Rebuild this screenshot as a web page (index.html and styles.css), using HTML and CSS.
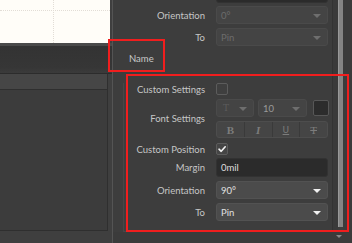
FILE: index.html
```html
<!DOCTYPE html>
<html>
<head>
<meta charset="utf-8">
<link rel="stylesheet" href="styles.css">
</head>
<body>
<div class="app">
  <div class="left">
    <div class="canvas">
      <div class="grid-v"></div>
      <div class="grid-h"></div>
    </div>
    <div class="canvas-edge"></div>
    <div class="tabbar"></div>
    <div class="tablist">
      <div class="tablist-head"></div>
      <div class="tablist-body"></div>
    </div>
  </div>
  <div class="panel">
    <div class="panel-main">
      <div class="content">
        <div class="row row-top">
          <span class="label"></span>
          <div class="input dark"></div>
        </div>
        <div class="row">
          <span class="label">Orientation</span>
          <div class="select disabled"><span>0°</span><i class="caret"></i></div>
        </div>
        <div class="row">
          <span class="label">To</span>
          <div class="select disabled"><span>Pin</span><i class="caret"></i></div>
        </div>
        <div class="name-row">Name</div>
        <div class="group">
          <div class="row row-check">
            <span class="label">Custom Settings</span>
            <div class="checkbox"></div>
          </div>
          <div class="row row-font">
            <span class="label">Font Settings</span>
            <div class="font-ctrls">
              <div class="font-line">
                <div class="select disabled font-family"><span class="tglyph">T</span><i class="caret"></i></div>
                <div class="select disabled font-size"><span class="size">10</span><i class="caret"></i></div>
                <div class="swatch"></div>
              </div>
              <div class="btn-group">
                <span class="fbtn b">B</span>
                <span class="fbtn i">I</span>
                <span class="fbtn u">U</span>
                <span class="fbtn s">T</span>
              </div>
            </div>
          </div>
          <div class="row row-check row-cp">
            <span class="label">Custom Position</span>
            <div class="checkbox checked">
              <svg width="10" height="10" viewBox="0 0 10 10"><path d="M2 5.2 L4.2 7.3 L8.2 2.8" fill="none" stroke="#f2f2f2" stroke-width="1.6" stroke-linecap="round" stroke-linejoin="round"/></svg>
            </div>
          </div>
          <div class="row row-margin">
            <span class="label">Margin</span>
            <div class="input dark text">0mil</div>
          </div>
          <div class="row">
            <span class="label">Orientation</span>
            <div class="select"><span>90°</span><i class="caret"></i></div>
          </div>
          <div class="row">
            <span class="label">To</span>
            <div class="select"><span>Pin</span><i class="caret"></i></div>
          </div>
        </div>
      </div>
      <div class="scroll-gap"></div>
      <div class="scrollbar"><div class="thumb"></div></div>
      <div class="edge"></div>
    </div>
    <div class="panel-foot"><i class="foot-arrow"></i></div>
  </div>
  <div class="mark mark-name"></div>
  <div class="mark mark-group"></div>
</div>
</body>
</html>
```
FILE: styles.css
```css
html, body {
  margin: 0;
  padding: 0;
}
body {
  width: 352px;
  height: 243px;
  overflow: hidden;
  background: #3c3c3c;
  font-family: Lato, "Noto Sans", sans-serif;
  font-size: 9.5px;
  color: #c9c9c9;
}
.app {
  position: relative;
  display: flex;
  width: 352px;
  height: 243px;
}
.left {
  width: 112px;
  display: flex;
  flex-direction: column;
  background: #3f3f3f;
}
.canvas {
  position: relative;
  height: 43px;
  width: 110px;
  background: #fffdf8;
}
.grid-v {
  position: absolute;
  left: 53px;
  top: 0;
  bottom: 0;
  border-left: 1px dotted #e2ddd6;
}
.grid-h {
  position: absolute;
  top: 10px;
  left: 0;
  right: 0;
  border-top: 1px dotted #e2ddd6;
}
.canvas-edge {
  height: 3px;
  background: #4a4a4a;
}
.tabbar {
  height: 27px;
  background: linear-gradient(#333333, #363636 80%, #3b3b3b);
  border-bottom: 1px solid #2c2c2c;
}
.tablist {
  flex: 1;
  width: 107px;
  display: flex;
  flex-direction: column;
  border-right: 1px solid #2f2f2f;
  border-bottom: 1px solid #2f2f2f;
  margin-bottom: 12px;
}
.tablist-head {
  height: 15px;
  background: #464646;
  border-bottom: 1px solid #2f2f2f;
}
.tablist-body {
  flex: 1;
  background: #3c3c3c;
}
.panel {
  flex: 1;
  display: flex;
  flex-direction: column;
  border-left: 1px solid #545454;
  background: #3d3d3d;
}
.panel-main {
  flex: 1;
  display: flex;
}
.content {
  width: 218px;
  display: flex;
  flex-direction: column;
  gap: 4px;
  padding-left: 1px;
  border-right: 1px solid #333333;
}
.row {
  display: flex;
  align-items: center;
  height: 18px;
}
.row-top {
  margin-top: -15px;
  margin-bottom: -1px;
}
.label {
  width: 91px;
  margin-right: 11px;
  text-align: right;
  white-space: nowrap;
  color: #c6c6c6;
}
.input, .select {
  box-sizing: border-box;
  width: 112px;
  height: 18px;
  border-radius: 3px;
}
.input.dark {
  background: #2b2b2b;
  border: 1px solid #323232;
}
.input.text {
  height: 19px;
  padding-left: 4px;
  line-height: 17px;
  color: #dedede;
}
.select {
  position: relative;
  display: flex;
  align-items: center;
  padding-left: 4px;
  background: #4b4b4b;
  border: 1px solid #525252;
  color: #e0e0e0;
}
.caret {
  position: absolute;
  right: 6px;
  top: 7px;
  width: 0;
  height: 0;
  border-left: 4px solid transparent;
  border-right: 4px solid transparent;
  border-top: 4px solid #f0f0f0;
}
.select.disabled {
  background: #444444;
  border-color: #4a4a4a;
  color: #6c6c6c;
}
.select.disabled .caret {
  border-top-color: #6e6e6e;
}
.name-row {
  height: 18px;
  line-height: 18px;
  padding-left: 15px;
  color: #c9c9c9;
  margin-bottom: 11px;
}
.group {
  display: flex;
  flex-direction: column;
  gap: 4px;
  margin-left: 9px;
  padding-bottom: 10px;
  border-left: 1px solid #474747;
  border-bottom: 1px solid #474747;
}
.group .label {
  width: 81px;
}
.row-check {
  height: 12px;
}
.checkbox {
  box-sizing: border-box;
  width: 12px;
  height: 12px;
  border: 1px solid #5c5c5c;
  border-radius: 2px;
  background: #3f3f3f;
  display: flex;
  align-items: center;
  justify-content: center;
}
.checkbox.checked {
  background: #454545;
}
.checkbox svg {
  display: block;
}
.row-font {
  height: 39px;
}
.font-ctrls {
  display: flex;
  flex-direction: column;
  gap: 4px;
}
.font-line {
  display: flex;
  align-items: center;
  gap: 4px;
}
.font-family {
  width: 38px;
}
.font-size {
  width: 49px;
  margin-right: 2px;
}
.size {
  color: #9a9a9a;
}
.tglyph {
  font-family: "DejaVu Serif", serif;
  font-size: 9px;
  color: #5c5c5c;
  padding-left: 2px;
}
.swatch {
  box-sizing: border-box;
  width: 16px;
  height: 16px;
  background: #2c2c2c;
  border: 1px solid #575757;
  border-radius: 2px;
}
.btn-group {
  box-sizing: border-box;
  display: flex;
  width: 112px;
  height: 17px;
  border: 1px solid #4d4d4d;
  border-radius: 3px;
  background: #454545;
  overflow: hidden;
}
.fbtn {
  flex: 1;
  display: flex;
  align-items: center;
  justify-content: center;
  font-family: "Liberation Serif", serif;
  font-size: 11px;
  color: #7c7c7c;
  border-left: 1px solid #3a3a3a;
}
.fbtn:first-child {
  border-left: none;
}
.fbtn.b {
  font-weight: bold;
}
.fbtn.i {
  font-style: italic;
  font-weight: bold;
}
.fbtn.u {
  text-decoration: underline;
  font-family: "DejaVu Sans", sans-serif;
  font-size: 9px;
}
.fbtn.s {
  text-decoration: line-through;
}
.row-cp {
  margin-top: 1px;
}
.row-margin {
  height: 19px;
  margin-top: -1px;
}
.scroll-gap {
  width: 5px;
  background: #3a3a3a;
}
.scrollbar {
  width: 5px;
  background: #6f6f6f;
  margin-bottom: 5px;
}
.thumb {
  height: 100%;
  background: #848484;
  border-left: 1px solid #999999;
  box-sizing: border-box;
}
.edge {
  flex: 1;
  background: #3b3b3b;
}
.panel-foot {
  position: relative;
  height: 11px;
  background: #3b3b3b;
}
.foot-arrow {
  position: absolute;
  right: 10px;
  top: 3px;
  width: 0;
  height: 0;
  border-left: 3px solid transparent;
  border-right: 3px solid transparent;
  border-top: 3px solid #8a8a8a;
}
.mark {
  position: absolute;
  box-sizing: border-box;
  border: 2px solid #f01e1e;
  pointer-events: none;
}
.mark-name {
  left: 108px;
  top: 39px;
  width: 57px;
  height: 33px;
}
.mark-group {
  left: 126px;
  top: 74px;
  width: 223px;
  height: 158px;
}
```
